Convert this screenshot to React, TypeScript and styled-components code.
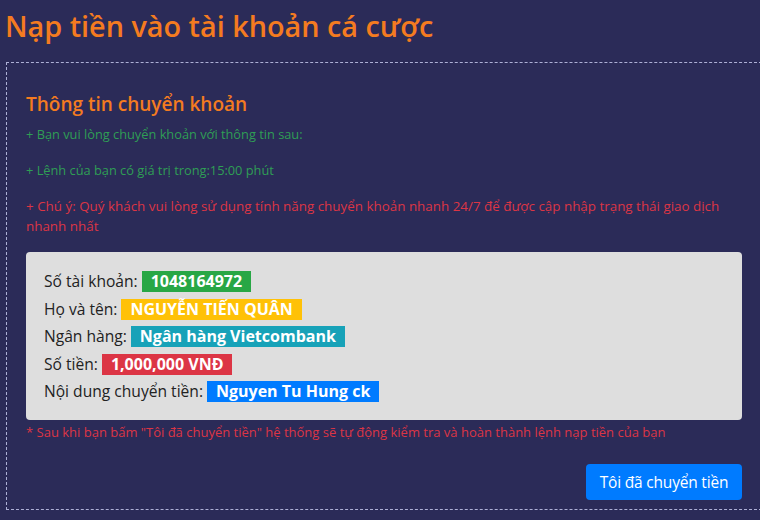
import React from "react";
import styled, { createGlobalStyle } from "styled-components";

const Global = createGlobalStyle`
  html, body { margin: 0; padding: 0; overflow: hidden; }
  body {
    background: #2b2b58;
    font-family: "Open Sans", "Noto Sans", sans-serif;
    width: 760px;
    height: 520px;
  }
`;

const Page = styled.div`
  padding: 0 0 0 6px;
  width: 780px;
`;

const Title = styled.h1`
  margin: 0 0 0 -1px;
  padding-top: 6px;
  height: 56px;
  font-size: 28.8px;
  font-weight: 600;
  line-height: 40px;
  color: #f47b20;
`;

const Box = styled.div`
  width: 716px;
  border: 1px dashed #aeb0d6;
  padding: 20px 19px 9px 19px;
`;

const SubTitle = styled.h3`
  margin: 8px 0 7px;
  font-size: 19px;
  font-weight: 600;
  line-height: 26px;
  color: #f47b20;
`;

const Note = styled.p<{ $tone: "green" | "red" }>`
  margin: 0 0 16px;
  font-size: ${(p) => (p.$tone === "green" ? "12.8px" : "13.4px")};
  line-height: 20px;
  font-weight: 400;
  color: ${(p) => (p.$tone === "green" ? "#2f9e55" : "#dc3545")};
`;

const InfoCard = styled.div`
  background: #dedede;
  border-radius: 4px;
  padding: 16px 18px 14px;
`;

const Row = styled.div`
  font-size: 15.6px;
  line-height: 27.5px;
  color: #222;
  display: flex;
  align-items: center;
  gap: 4px;
`;

const Badge = styled.span<{ $bg: string }>`
  display: inline-block;
  background: ${(p) => p.$bg};
  color: #fff;
  font-weight: 700;
  font-size: 16px;
  line-height: 21px;
  padding: 0 9px;
`;

const FootNote = styled.p`
  margin: 2px 0 22px;
  font-size: 13px;
  line-height: 20px;
  color: #dc3545;
`;

const Actions = styled.div`
  display: flex;
  justify-content: flex-end;
`;

const Button = styled.button`
  background: #007bff;
  color: #fff;
  border: none;
  border-radius: 4px;
  font-family: "Open Sans", "Noto Sans", sans-serif;
  font-size: 15.5px;
  letter-spacing: -0.2px;
  white-space: nowrap;
  line-height: 24px;
  padding: 0;
  height: 36px;
  width: 156px;
  cursor: pointer;
`;

export default function App() {
  return (
    <>
      <Global />
      <Page>
        <Title>Nạp tiền vào tài khoản cá cược</Title>
        <Box>
          <SubTitle>Thông tin chuyển khoản</SubTitle>
          <Note $tone="green">+ Bạn vui lòng chuyển khoản với thông tin sau:</Note>
          <Note $tone="green">+ Lệnh của bạn có giá trị trong:15:00 phút</Note>
          <Note $tone="red">
            + Chú ý: Quý khách vui lòng sử dụng tính năng chuyển khoản nhanh 24/7 để được cập nhập trạng thái giao dịch nhanh nhất
          </Note>
          <InfoCard>
            <Row>
              Số tài khoản: <Badge $bg="#28a745">1048164972</Badge>
            </Row>
            <Row>
              Họ và tên: <Badge $bg="#ffc107">NGUYỄN TIẾN QUÂN</Badge>
            </Row>
            <Row>
              Ngân hàng: <Badge $bg="#17a2b8">Ngân hàng Vietcombank</Badge>
            </Row>
            <Row>
              Số tiền: <Badge $bg="#dc3545">1,000,000 VNĐ</Badge>
            </Row>
            <Row>
              Nội dung chuyển tiền: <Badge $bg="#007bff">Nguyen Tu Hung ck</Badge>
            </Row>
          </InfoCard>
          <FootNote>
            * Sau khi bạn bấm "Tôi đã chuyển tiền" hệ thống sẽ tự động kiểm tra và hoàn thành lệnh nạp tiền của bạn
          </FootNote>
          <Actions>
            <Button>Tôi đã chuyển tiền</Button>
          </Actions>
        </Box>
      </Page>
    </>
  );
}
